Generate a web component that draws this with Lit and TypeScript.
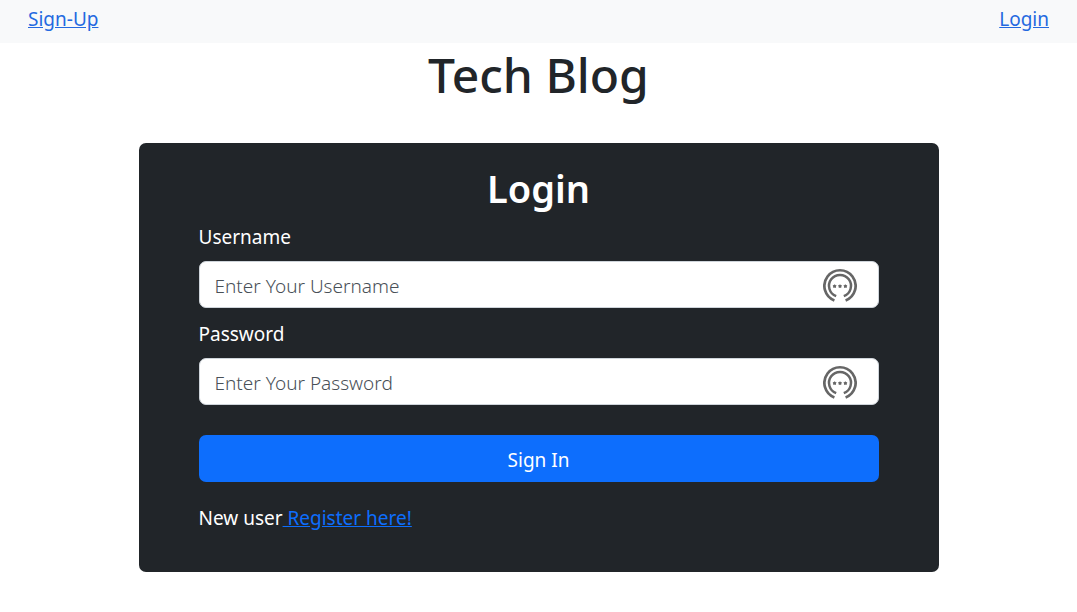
import { LitElement, html, css, svg } from "lit";
import { customElement, property } from "lit/decorators.js";

@customElement("key-badge")
class KeyBadge extends LitElement {
  static styles = css`
    :host { display: block; width: 34px; height: 35px; }
    svg { display: block; width: 100%; height: 100%; }
  `;
  render() {
    return html`<svg viewBox="0 -1 34 35" fill="none" stroke="#666" aria-hidden="true">
      <path d="M11.4 31.4A15.6 15.6 0 1 1 22.6 31.4" stroke-width="2.7" />
      <path d="M13.2 27.2A11 11 0 1 1 20.8 27.2" stroke-width="2.5" />
      ${[11.6, 17, 22.4].map(
        (x) => svg`<path transform="translate(${x} 17.2)" stroke-width="1.1" d="M0 -1.8V0M-1.7 -.6L0 0L1.7 -.6M-1.1 1.5L0 0L1.1 1.5" />
          <circle cx=${x} cy="17.2" r="1.2" fill="#666" stroke="none" />`
      )}
    </svg>`;
  }
}

@customElement("login-field")
class LoginField extends LitElement {
  @property() label = "";
  @property() type = "text";
  static styles = css`
    :host { display: block; }
    label { display: block; line-height: 29px; margin-bottom: 9px; }
    .box { display: grid; align-items: center; }
    input {
      grid-area: 1 / 1; box-sizing: border-box; width: 100%; height: 47px; padding: 2px 15px 0;
      border: 1px solid #ced4da; border-radius: 7px; background: #fff; color: #212529;
      font: inherit; font-weight: 300;
    }
    input::placeholder { color: #495057; opacity: 1; }
    key-badge { grid-area: 1 / 1; justify-self: end; margin: 2px 22px 0 0; }
  `;
  render() {
    return html`<label for="field">${this.label}</label>
      <div class="box">
        <input id="field" type=${this.type} placeholder="Enter Your ${this.label}" />
        <key-badge></key-badge>
      </div>`;
  }
}

@customElement("app-root")
class AppRoot extends LitElement {
  static styles = css`
    :host {
      display: block; color: #212529; background: #fff;
      font: 19px/29px "Noto Sans", "Open Sans", sans-serif;
    }
    a { color: #0d6efd; }
    nav { display: flex; justify-content: space-between; padding: 5px 28px 9px; background: #f8f9fa; }
    nav a { color: #2469e0; }
    h1, h2 { margin: 0; font-weight: 500; text-align: center; }
    h1 { font-size: 48px; line-height: 60px; margin-top: 2px; }
    h2 { font-size: 38px; line-height: 46px; margin-bottom: 12px; font-weight: 600; }
    .card {
      box-sizing: border-box; max-width: 800px; margin: 38px auto 40px; padding: 22px 60px 39px;
      border-radius: 7px; background: #212529; color: #fff;
    }
    form { display: flex; flex-direction: column; }
    login-field + login-field { margin-top: 12px; }
    button {
      height: 47px; margin: 30px 0 22px; padding: 4px 0 0; border: 0; border-radius: 7px;
      background: #0d6efd; color: #fff; font: inherit;
    }
    p { margin: 0; }
  `;
  render() {
    return html`
      <nav><a href="#signup">Sign-Up</a><a href="#login">Login</a></nav>
      <h1>Tech Blog</h1>
      <main class="card">
        <h2>Login</h2>
        <form>
          <login-field label="Username"></login-field>
          <login-field label="Password" type="password"></login-field>
          <button type="button">Sign In</button>
        </form>
        <p>New user<a href="#signup"> Register here!</a></p>
      </main>`;
  }
}
